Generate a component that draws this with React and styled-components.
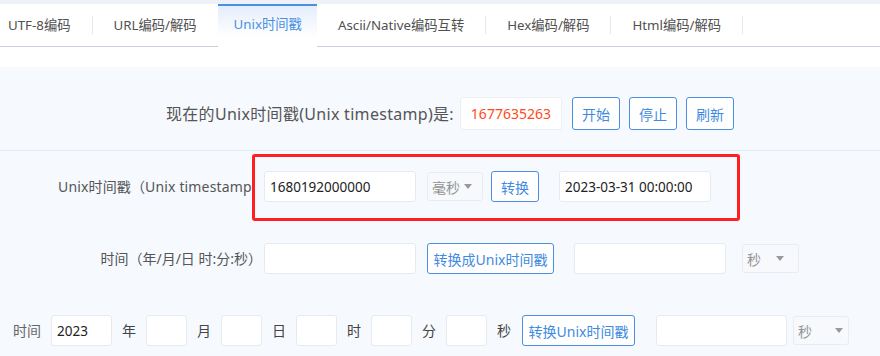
import React from "react";
import styled, { createGlobalStyle } from "styled-components";

const GlobalStyle = createGlobalStyle`
  body {
    margin: 0;
    background: #f6f9fe;
    font-family: "Noto Sans", "Noto Sans CJK SC", sans-serif;
    color: #555;
  }
`;

const tabs = ["UTF-8编码", "URL编码/解码", "Unix时间戳", "Ascii/Native编码互转", "Hex编码/解码", "Html编码/解码"];

export default function App() {
  return (
    <Page>
      <GlobalStyle />
      <Header>
        <TabBar>
          {tabs.map((t, i) => (
            <React.Fragment key={t}>
              <Tab $active={i === 2} $first={i === 0}>{t}</Tab>
              {i !== 1 && i !== 2 && <Divider />}
            </React.Fragment>
          ))}
        </TabBar>
        <WhiteGap />
      </Header>

      <NowSection>
        <NowLabel>现在的Unix时间戳(Unix timestamp)是:</NowLabel>
        <NowValue>1677635263</NowValue>
        <Button $w={48} $h={33} $ml={10}>开始</Button>
        <Button $w={48} $h={33} $ml={9}>停止</Button>
        <Button $w={48} $h={33} $ml={9}>刷新</Button>
      </NowSection>

      <Form>
        <Row $pl={58}>
          <Label $ls={0.15} $w={196} $mr={10}>Unix时间戳（Unix timestamp）</Label>
          <Input $w={152} defaultValue="1680192000000" />
          <Select $w={56} $ml={11} $gap={4}>毫秒</Select>
          <Button $w={48} $ml={8}>转换</Button>
          <Input $w={152} $ml={20} defaultValue="2023-03-31 00:00:00" />
          <Highlight />
        </Row>

        <Row $pl={58}>
          <Label>时间（年/月/日 时:分:秒）</Label>
          <Input $w={152} />
          <Button $w={127} $ml={11}>转换成Unix时间戳</Button>
          <Input $w={152} $ml={20} />
          <Select $w={57} $ml={16} $gap={15}>秒</Select>
        </Row>

        <Row $pl={13}>
          <Unit $lead>时间</Unit>
          <Input $w={61} $ml={10} defaultValue="2023" />
          <Unit>年</Unit>
          <Input $w={41} $ml={10} />
          <Unit>月</Unit>
          <Input $w={41} $ml={10} />
          <Unit>日</Unit>
          <Input $w={41} $ml={10} />
          <Unit>时</Unit>
          <Input $w={41} $ml={10} />
          <Unit>分</Unit>
          <Input $w={41} $ml={10} />
          <Unit>秒</Unit>
          <Button $w={113} $ml={11}>转换Unix时间戳</Button>
          <Input $w={131} $ml={21} />
          <Select $w={56} $ml={6} $gap={23}>秒</Select>
        </Row>
      </Form>
    </Page>
  );
}

function Select({ children, ...props }) {
  return (
    <SelectBox {...props}>
      <span>{children}</span>
      <Caret $gap={props.$gap} />
    </SelectBox>
  );
}

const Page = styled.div`
  width: 880px;
  height: 356px;
  overflow: hidden;
`;

const Header = styled.div`
  padding-top: 4px;
  background: #eef2f8;
`;

const TabBar = styled.div`
  display: flex;
  align-items: stretch;
  height: 42px;
  background: #fff;
  border-bottom: 1px solid #c9cfdf;
`;

const Tab = styled.div`
  display: flex;
  align-items: center;
  padding: 0 ${p => (p.$active ? 15 : 21)}px 0 ${p => (p.$first ? 8 : p.$active ? 16 : 21)}px;
  font-size: 13.3px;
  line-height: 20px;
  white-space: nowrap;
  color: ${p => (p.$active ? "#4a90e2" : "#505050")};
  ${p => p.$active && `
    border-top: 2px solid #4a90e2;
    margin-bottom: -1px;
    padding-bottom: 5px;
    background: linear-gradient(#e4eefc, #fff 75%);
  `}
`;

const Divider = styled.div`
  width: 1px;
  height: 18px;
  align-self: center;
  background: #e4e7ed;
`;

const WhiteGap = styled.div`
  height: 20px;
  background: #fff;
`;

const NowSection = styled.div`
  display: flex;
  align-items: center;
  padding: 30px 0 20px 166px;
  border-bottom: 1px solid #e6ebf2;
`;

const NowLabel = styled.span`
  font-size: 16px;
  line-height: 22px;
  letter-spacing: 0.3px;
  color: #555;
  white-space: nowrap;
  margin-right: 6px;
`;

const NowValue = styled.div`
  box-sizing: border-box;
  width: 102px;
  height: 33px;
  display: flex;
  align-items: center;
  justify-content: center;
  background: #fff;
  border: 1px solid #eceff4;
  border-radius: 3px;
  font-size: 14px;
  color: #ff4a1c;
`;

const Button = styled.button`
  box-sizing: border-box;
  width: ${p => p.$w}px;
  height: ${p => p.$h || 31}px;
  margin-left: ${p => p.$ml || 0}px;
  padding: 0;
  flex-shrink: 0;
  background: #fff;
  border: 1px solid #4a8fe2;
  border-radius: 3px;
  color: #3f8ae0;
  font-family: inherit;
  font-size: 14px;
  white-space: nowrap;
`;

const Form = styled.div`
  display: flex;
  flex-direction: column;
  gap: 41px;
  padding-top: 20px;
`;

const Row = styled.div`
  position: relative;
  display: flex;
  align-items: center;
  height: 31px;
  padding-left: ${p => p.$pl}px;
`;

const Label = styled.div`
  width: ${p => p.$w || 204}px;
  flex-shrink: 0;
  margin-right: ${p => p.$mr || 2}px;
  overflow: hidden;
  text-align: right;
  white-space: nowrap;
  font-size: 14px;
  line-height: 20px;
  letter-spacing: ${p => p.$ls || 0}px;
  color: #555;
`;

const Input = styled.input`
  box-sizing: border-box;
  width: ${p => p.$w}px;
  height: 31px;
  margin-left: ${p => p.$ml || 0}px;
  flex-shrink: 0;
  padding: 0 5px;
  background: #fff;
  border: 1px solid #e6eaf1;
  border-radius: 3px;
  outline: none;
  font-family: inherit;
  font-size: 13.5px;
  color: #222;
`;

const Unit = styled.span`
  margin-left: ${p => (p.$lead ? 0 : 10)}px;
  font-size: 14px;
  line-height: 20px;
  color: ${p => (p.$lead ? "#666" : "#444")};
  white-space: nowrap;
`;

const SelectBox = styled.div`
  box-sizing: border-box;
  display: flex;
  align-items: center;
  width: ${p => p.$w}px;
  height: 29px;
  margin-left: ${p => p.$ml || 0}px;
  flex-shrink: 0;
  padding-left: 4px;
  background: #f7f9fd;
  border: 1px solid #e9edf3;
  border-radius: 3px;
  font-size: 14px;
  color: #939393;
  white-space: nowrap;
`;

const Caret = styled.i`
  margin-left: ${p => p.$gap}px;
  width: 0;
  height: 0;
  border-left: 4px solid transparent;
  border-right: 4px solid transparent;
  border-top: 5px solid #999;
`;

const Highlight = styled.div`
  position: absolute;
  left: 252px;
  top: -17px;
  width: 488px;
  height: 67px;
  box-sizing: border-box;
  border: 3px solid #ff1f1f;
  border-radius: 3px;
  pointer-events: none;
`;
